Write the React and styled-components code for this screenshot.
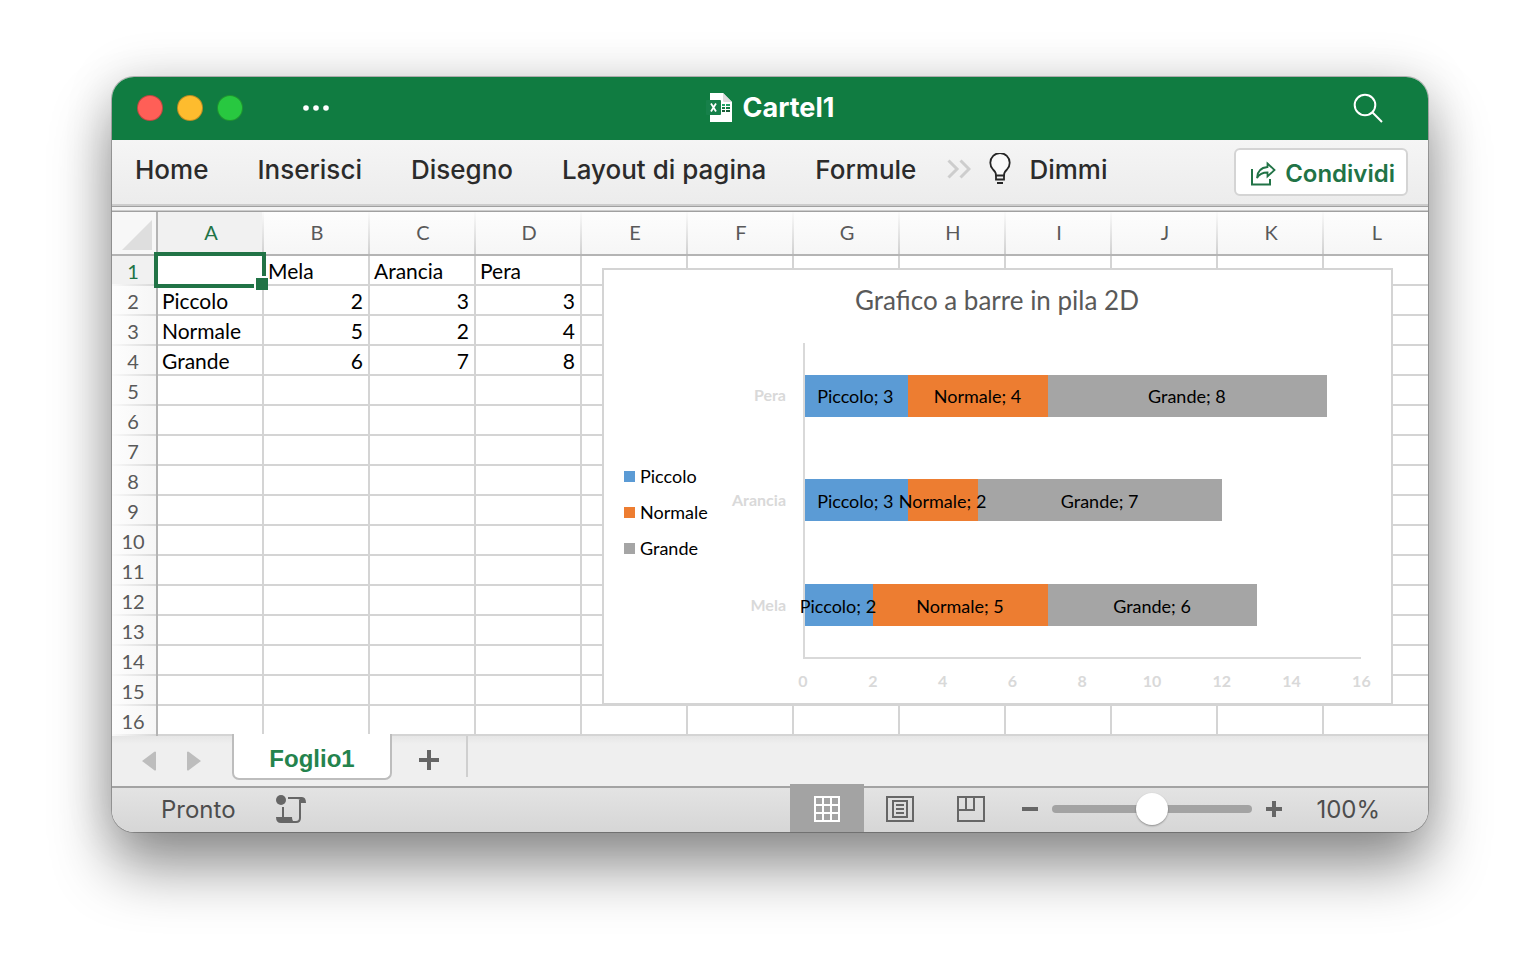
import React, { useState } from 'react';
import styled, { createGlobalStyle, css } from 'styled-components';

const columns = ['A', 'B', 'C', 'D', 'E', 'F', 'G', 'H', 'I', 'J', 'K', 'L'];

const cells = [
  ['', 'Mela', 'Arancia', 'Pera'],
  ['Piccolo', 2, 3, 3],
  ['Normale', 5, 2, 4],
  ['Grande', 6, 7, 8],
];

const rows = Array.from({ length: 16 }, (_, i) => cells[i] || []);

const series = [
  { name: 'Piccolo', color: '#5b9bd5' },
  { name: 'Normale', color: '#ed7d31' },
  { name: 'Grande', color: '#a5a5a5' },
];

const fruits = [
  { name: 'Pera', values: [3, 4, 8] },
  { name: 'Arancia', values: [3, 2, 7] },
  { name: 'Mela', values: [2, 5, 6] },
];

const ticks = [0, 2, 4, 6, 8, 10, 12, 14, 16];

const tabs = ['Home', 'Inserisci', 'Disegno', 'Layout di pagina', 'Formule'];

const FileIcon = () => (
  <svg width="28" height="32" viewBox="0 0 28 32" aria-hidden="true">
    <path d="M4 1h13l9 9v20H4z" fill="#fff" />
    <path d="M17 1l9 9h-7.500q-1.500 0-1.500-1.500z" fill="#dcdcdc" />
    <path d="M16 12h3v2h-3zM20 12h4v2h-4z" fill="#21a366" />
    <path d="M16 15h3v2h-3zM20 15h4v2h-4z" fill="#107c41" />
    <path d="M16 18h3v2h-3zM20 18h4v2h-4z" fill="#185c37" />
    <rect x="0" y="8" width="15" height="15" rx="1" fill="#17804a" />
    <path d="M5 11.500l5 8M10 11.500l-5 8" stroke="#fff" strokeWidth="1.800" />
  </svg>
);

const SearchIcon = () => (
  <svg width="30" height="30" viewBox="0 0 30 30" fill="none" stroke="#fff" strokeWidth="2" aria-hidden="true">
    <circle cx="12" cy="12" r="10.300" />
    <path d="M19.300 19.300L29 29" />
  </svg>
);

const ChevronsIcon = () => (
  <svg width="24" height="20" viewBox="0 0 24 20" fill="none" stroke="#cdcdcd" strokeWidth="3" aria-hidden="true">
    <path d="M1.500 1.500L10 10l-8.500 8.500M13.500 1.500L22 10l-8.500 8.500" />
  </svg>
);

const BulbIcon = () => (
  <svg width="22" height="32" viewBox="0 0 22 32" fill="none" stroke="#262626" strokeWidth="1.800" aria-hidden="true">
    <path d="M7 22.500q0-3.500-3-6a9.700 9.700 0 1 1 14 0q-3 2.500-3 6z" fill="#fafafa" />
    <path d="M7 22v4.500h8V22" />
    <path d="M8 30h6" strokeWidth="2" />
  </svg>
);

const ShareIcon = () => (
  <svg width="25" height="25" viewBox="0 0 25 25" fill="none" stroke="#217346" strokeWidth="2" aria-hidden="true">
    <path d="M1 8v15.500h18V18" />
    <path d="M16.500 2.500l7 6.500-7 6.500v-4C11 11.500 8 13.500 6 17c.3-6.500 4-10.500 10.500-11z" strokeWidth="1.800" />
  </svg>
);

const ScrollIcon = () => (
  <svg width="30" height="30" viewBox="0 0 30 30" aria-hidden="true">
    <circle cx="5" cy="6" r="5" fill="#666" />
    <path d="M7 13v11" stroke="#666" strokeWidth="2" />
    <path d="M12 4h14M24 6v18q0 4-4 4H6" fill="none" stroke="#666" strokeWidth="2" />
    <path d="M21 3h5q4 0 4 6h-5q0-4-4-4z" fill="#666" />
    <path d="M0 23h16q0 4 3 6H5q-5 0-5-6z" fill="#666" />
  </svg>
);

const NormalViewIcon = () => (
  <svg width="28" height="28" viewBox="0 0 28 28" fill="none" stroke="#fff" strokeWidth="2" aria-hidden="true">
    <rect x="2" y="2" width="24" height="24" />
    <path d="M10 2v24M18 2v24M2 10h24M2 18h24" />
  </svg>
);

const PageViewIcon = () => (
  <svg width="28" height="28" viewBox="0 0 28 28" fill="none" stroke="#666" strokeWidth="2" aria-hidden="true">
    <rect x="1" y="2" width="26" height="24" />
    <rect x="7" y="6" width="14" height="16" />
    <path d="M10 10h8M10 14h8M10 18h8" />
  </svg>
);

const BreakViewIcon = () => (
  <svg width="28" height="28" viewBox="0 0 28 28" fill="none" stroke="#666" strokeWidth="2" aria-hidden="true">
    <rect x="1" y="2" width="26" height="24" />
    <path d="M9 2v13M17 2v13M1 15h17" />
  </svg>
);

const PlusIcon = ({ size, weight }) => (
  <svg width={size} height={size} viewBox="0 0 20 20" stroke="#666" strokeWidth={weight} aria-hidden="true">
    <path d="M0 10h20M10 0v20" />
  </svg>
);

const MinusIcon = () => (
  <svg width="16" height="16" viewBox="0 0 16 16" stroke="#666" strokeWidth="4" aria-hidden="true">
    <path d="M0 8h16" />
  </svg>
);

// x position of a value on the horizontal axis
const scale = (value) => 200 + value * 34.9;

const sum = (values) => values.reduce((a, b) => a + b, 0);

const Chart = () => (
  <ChartFrame viewBox="0 0 787 433" role="img" aria-label="Grafico a barre in pila 2D">
    <ChartTitle x="393" y="40">Grafico a barre in pila 2D</ChartTitle>
    {series.map((item, i) => (
      <g key={item.name}>
        <rect x="20" y={201 + i * 36} width="11" height="11" fill={item.color} />
        <ChartLabel x="36" y={213 + i * 36}>{item.name}</ChartLabel>
      </g>
    ))}
    {fruits.map((fruit, row) => (
      <g key={fruit.name}>
        <AxisLabel x="182" y={131 + row * 105} $end>{fruit.name}</AxisLabel>
        {fruit.values.map((value, i) => {
          const start = Math.floor(scale(sum(fruit.values.slice(0, i))));
          const end = Math.floor(scale(sum(fruit.values.slice(0, i + 1))));
          return (
            <rect
              key={series[i].name}
              x={start}
              y={Math.floor(105 + row * 104.6)}
              width={end - start}
              height="42"
              fill={series[i].color}
            />
          );
        })}
      </g>
    ))}
    <path d="M200 73v315h557" fill="none" stroke="#d9d9d9" strokeWidth="2" />
    {fruits.map((fruit, row) =>
      fruit.values.map((value, i) => (
        <ChartLabel
          key={fruit.name + series[i].name}
          $middle
          x={scale(sum(fruit.values.slice(0, i)) + value / 2) - 1}
          y={133 + row * 105}
        >
          {`${series[i].name}; ${value}`}
        </ChartLabel>
      ))
    )}
    {ticks.map((tick) => (
      <AxisLabel key={tick} x={scale(tick) - 1} y="417">{tick}</AxisLabel>
    ))}
  </ChartFrame>
);

const App = () => {
  const [zoom, setZoom] = useState(100);

  return (
    <Desktop>
      <GlobalStyle />
      <Window>
        <TitleBar>
          <WindowControls>
            <Light $color="#ff5f57" aria-label="Chiudi" />
            <Light $color="#febc2e" aria-label="Riduci" />
            <Light $color="#28c840" aria-label="Ingrandisci" />
            <MoreButton aria-label="Altro">
              <svg width="26" height="6" viewBox="0 0 26 6" fill="#fff" aria-hidden="true">
                <circle cx="3" cy="3" r="2.800" />
                <circle cx="13" cy="3" r="2.800" />
                <circle cx="23" cy="3" r="2.800" />
              </svg>
            </MoreButton>
          </WindowControls>
          <Title>
            <FileIcon />
            Cartel1
          </Title>
          <SearchButton aria-label="Cerca">
            <SearchIcon />
          </SearchButton>
        </TitleBar>

        <Ribbon>
          <Tabs>
            {tabs.map((tab) => (
              <Tab key={tab}>{tab}</Tab>
            ))}
          </Tabs>
          <ChevronsIcon />
          <TellMe>
            <BulbIcon />
            Dimmi
          </TellMe>
          <ShareButton>
            <ShareIcon />
            Condividi
          </ShareButton>
        </Ribbon>
        <Divider />

        <Sheet>
          <Grid>
            <colgroup>
              <HeadCol />
              {columns.map((name) => (
                <Col key={name} />
              ))}
            </colgroup>
            <thead>
              <tr>
                <Corner>
                  <svg width="30" height="30" viewBox="0 0 30 30" aria-hidden="true">
                    <path d="M30 0v30H0z" fill="#dedede" />
                  </svg>
                </Corner>
                {columns.map((name, i) => (
                  <ColumnHead key={name} $active={i === 0}>{name}</ColumnHead>
                ))}
              </tr>
            </thead>
            <tbody>
              {rows.map((row, r) => (
                <tr key={r}>
                  <RowHead $active={r === 0}>{r + 1}</RowHead>
                  {columns.map((name, c) => (
                    <Cell key={name} $number={typeof row[c] === 'number'}>
                      {row[c]}
                      {r === 0 && c === 0 && <Selection />}
                    </Cell>
                  ))}
                </tr>
              ))}
            </tbody>
          </Grid>
          <Chart />
        </Sheet>

        <SheetBar>
          <ArrowButton aria-label="Foglio precedente">
            <svg width="14" height="20" viewBox="0 0 14 20" aria-hidden="true">
              <path d="M14 1v18q-1 1-2 0L0 10 12 1q1-1 2 0z" fill="#bdbdbd" />
            </svg>
          </ArrowButton>
          <ArrowButton aria-label="Foglio successivo">
            <svg width="14" height="20" viewBox="0 0 14 20" aria-hidden="true">
              <path d="M0 1v18q1 1 2 0l12-9L2 1q-1-1-2 0z" fill="#bdbdbd" />
            </svg>
          </ArrowButton>
          <SheetTab>Foglio1</SheetTab>
          <AddSheet aria-label="Aggiungi foglio">
            <PlusIcon size={20} weight={4} />
          </AddSheet>
        </SheetBar>

        <StatusBar>
          <Status>Pronto</Status>
          <ScrollIcon />
          <Views>
            <ViewButton $active aria-label="Normale"><NormalViewIcon /></ViewButton>
            <ViewButton aria-label="Layout di pagina"><PageViewIcon /></ViewButton>
            <ViewButton aria-label="Anteprima interruzioni"><BreakViewIcon /></ViewButton>
          </Views>
          <ZoomButton aria-label="Riduci zoom" onClick={() => setZoom(Math.max(10, zoom - 10))}>
            <MinusIcon />
          </ZoomButton>
          <ZoomSlider
            type="range"
            min="0"
            max="200"
            value={zoom}
            aria-label="Zoom"
            onChange={(e) => setZoom(Number(e.target.value))}
          />
          <ZoomButton aria-label="Aumenta zoom" onClick={() => setZoom(Math.min(200, zoom + 10))}>
            <PlusIcon size={16} weight={5} />
          </ZoomButton>
          <ZoomValue>{zoom}%</ZoomValue>
        </StatusBar>
      </Window>
    </Desktop>
  );
};

export default App;

const GlobalStyle = createGlobalStyle`
  * {
    box-sizing: border-box;
  }
  body {
    margin: 0;
    background: #fff;
    font-family: Inter, "Liberation Sans", sans-serif;
  }
  button {
    border: none;
    background: none;
    padding: 0;
    margin: 0;
    font-family: inherit;
    cursor: pointer;
  }
  svg {
    display: block;
    flex: none;
  }
`;

const Desktop = styled.div`
  min-height: 100vh;
  padding: 77px 112px 0;
  overflow: hidden;
`;

const Window = styled.main`
  border-radius: 22px;
  overflow: hidden;
  background: #fff;
  box-shadow: 0 0 0 1px rgba(0, 0, 0, 0.24), 0 36px 60px rgba(0, 0, 0, 0.42), 0 0 50px rgba(0, 0, 0, 0.14);
`;

const TitleBar = styled.header`
  display: grid;
  grid-template-columns: 1fr auto 1fr;
  align-items: center;
  height: 63px;
  padding: 0 25px 2px;
  background: #107c41;
`;

const WindowControls = styled.div`
  display: flex;
  align-items: center;
  gap: 14px;
`;

const Light = styled.button`
  width: 26px;
  height: 26px;
  border-radius: 50%;
  border: 1px solid rgba(0, 0, 0, 0.25);
  background: ${({ $color }) => $color};
`;

const MoreButton = styled.button`
  margin-left: 46px;
`;

const Title = styled.h1`
  display: flex;
  align-items: center;
  gap: 9px;
  margin: 0;
  color: #fff;
  font-size: 27px;
  font-weight: 700;
  line-height: 32px;
`;

const SearchButton = styled.button`
  justify-self: end;
  margin-right: 20px;
`;

const Ribbon = styled.nav`
  display: flex;
  align-items: center;
  height: 64px;
  padding: 0 20px 6px 23px;
  background: linear-gradient(#f5f5f5, #ececec);
  color: #2b2b2b;
`;

const Tabs = styled.div`
  display: flex;
  gap: 49px;
  margin-right: 31px;
`;

const Tab = styled.button`
  color: inherit;
  font-size: 26px;
  font-weight: 500;
  white-space: nowrap;
`;

const TellMe = styled.button`
  display: flex;
  align-items: center;
  gap: 18px;
  margin-left: 18px;
  color: inherit;
  font-size: 26px;
  font-weight: 500;
`;

const ShareButton = styled.button`
  display: flex;
  align-items: center;
  gap: 9px;
  height: 48px;
  margin: 6px 0 0 auto;
  padding: 2px 11px 0 15px;
  border: 2px solid #d4d4d4;
  border-radius: 6px;
  background: #fff;
  color: #217346;
  font-size: 24px;
  font-weight: 600;
`;

const Divider = styled.div`
  height: 8px;
  border-top: 2px solid #cccccc;
  border-bottom: 1px solid #a0a0a0;
  background: linear-gradient(#a0a0a0 1px, #f4f4f4 1px 4px, #cccccc 4px);
`;

const Sheet = styled.section`
  position: relative;
  overflow: hidden;
`;

const Grid = styled.table`
  width: 1318px;
  table-layout: fixed;
  border-collapse: separate;
  border-spacing: 0;
  font-family: Lato, Carlito, sans-serif;
`;

const HeadCol = styled.col`
  width: 46px;
`;

const Col = styled.col`
  width: 106px;
`;

const headCell = css`
  color: ${({ $active }) => ($active ? '#217346' : '#595959')};
  font-size: 20px;
  font-weight: 400;
  line-height: 24px;
`;

const Corner = styled.td`
  height: 44px;
  padding: 4px 0 0 10px;
  border-right: 2px solid #b4b4b4;
  border-bottom: 2px solid #b4b4b4;
  background: #f7f7f7;
`;

const ColumnHead = styled.th`
  ${headCell}
  height: 44px;
  padding: 0 0 2px;
  border-bottom: 2px solid #b4b4b4;
  background:
    linear-gradient(#fafafa, #d0d0d0) right / 2px 100% no-repeat,
    ${({ $active }) => ($active ? 'linear-gradient(#f1f1f1, #f1f1f1)' : 'linear-gradient(#fdfdfd, #f6f6f6)')};
`;

const RowHead = styled.th`
  ${headCell}
  height: 30px;
  padding: 0 2px 0 0;
  border-right: 2px solid #b4b4b4;
  background:
    linear-gradient(90deg, #fafafa, #d8d8d8) bottom / 100% 2px no-repeat,
    ${({ $active }) => ($active ? 'linear-gradient(#f1f1f1, #f1f1f1)' : 'linear-gradient(90deg, #fdfdfd, #f6f6f6)')};
`;

const Cell = styled.td`
  position: relative;
  height: 30px;
  padding: 2px 5px 0 4px;
  border-right: 2px solid #d4d4d4;
  border-bottom: 2px solid #d4d4d4;
  color: #000;
  font-size: 21px;
  line-height: 26px;
  white-space: nowrap;
  text-align: ${({ $number }) => ($number ? 'right' : 'left')};
`;

const Selection = styled.div`
  position: absolute;
  z-index: 1;
  inset: -4px -4px -4px -4px;
  border: 4px solid #217346;

  &::after {
    content: '';
    position: absolute;
    right: -6px;
    bottom: -6px;
    width: 12px;
    height: 12px;
    border: solid #fff;
    border-width: 2px 0 0 2px;
    background: #217346;
  }
`;

const ChartFrame = styled.svg`
  position: absolute;
  left: 490px;
  top: 56px;
  width: 791px;
  height: 437px;
  border: 2px solid #d4d4d4;
  background: #fff;
  font-family: Lato, Carlito, sans-serif;
`;

const ChartTitle = styled.text`
  fill: #595959;
  font-size: 26px;
  text-anchor: middle;
`;

const ChartLabel = styled.text`
  fill: #000;
  font-size: 18px;
  text-anchor: ${({ $middle }) => ($middle ? 'middle' : 'start')};
`;

const AxisLabel = styled.text`
  fill: #d9d9d9;
  font-size: 16px;
  font-weight: 700;
  text-anchor: ${({ $end }) => ($end ? 'end' : 'middle')};
`;

const SheetBar = styled.div`
  position: relative;
  display: flex;
  height: 50px;
  padding-left: 30px;
  background: linear-gradient(#e6e6e6, #efefef 8px);
`;

const ArrowButton = styled.button`
  margin-right: 31px;
`;

const SheetTab = styled.button`
  width: 160px;
  height: 46px;
  margin-top: -2px;
  padding-top: 6px;
  border: solid #bdbdbd;
  border-width: 0 2px 2px;
  border-radius: 0 0 7px 7px;
  background: #fff;
  color: #24834d;
  font-family: "Liberation Sans", Arial, sans-serif;
  font-size: 24px;
  font-weight: 700;
`;

const AddSheet = styled.button`
  display: flex;
  align-items: center;
  justify-content: center;
  width: 76px;
  height: 41px;
  padding-top: 6px;
  border-right: 2px solid #cfcfcf;
`;

const StatusBar = styled.footer`
  position: relative;
  display: flex;
  align-items: center;
  height: 46px;
  padding: 0 48px 2px 49px;
  border-top: 2px solid #a3a3a3;
  background: linear-gradient(#e3e3e3, #d6d6d6);
  color: #4d4d4d;
`;

const Status = styled.span`
  margin-right: 40px;
  font-size: 24px;
`;

const Views = styled.div`
  display: flex;
  align-self: stretch;
  margin: 0 12px 0 auto;
`;

const ViewButton = styled.button`
  display: flex;
  align-items: center;
  justify-content: center;
  width: ${({ $active }) => ($active ? '74px' : '71px')};
  margin: ${({ $active }) => ($active ? '-4px 0 -2px' : '0')};
  padding-top: ${({ $active }) => ($active ? '2px' : '0')};
  background: ${({ $active }) => ($active ? '#a3a3a3' : 'none')};
`;

const ZoomButton = styled.button`
  padding: 4px;
`;

const ZoomSlider = styled.input`
  appearance: none;
  width: 200px;
  height: 8px;
  margin: 0 10px;
  border-radius: 4px;
  background: #a3a3a3;

  &::-webkit-slider-thumb {
    appearance: none;
    width: 32px;
    height: 32px;
    border-radius: 50%;
    background: #fff;
    box-shadow: 0 1px 2px rgba(0, 0, 0, 0.35);
  }
`;

const ZoomValue = styled.span`
  margin-left: 30px;
  font-size: 24px;
`;
